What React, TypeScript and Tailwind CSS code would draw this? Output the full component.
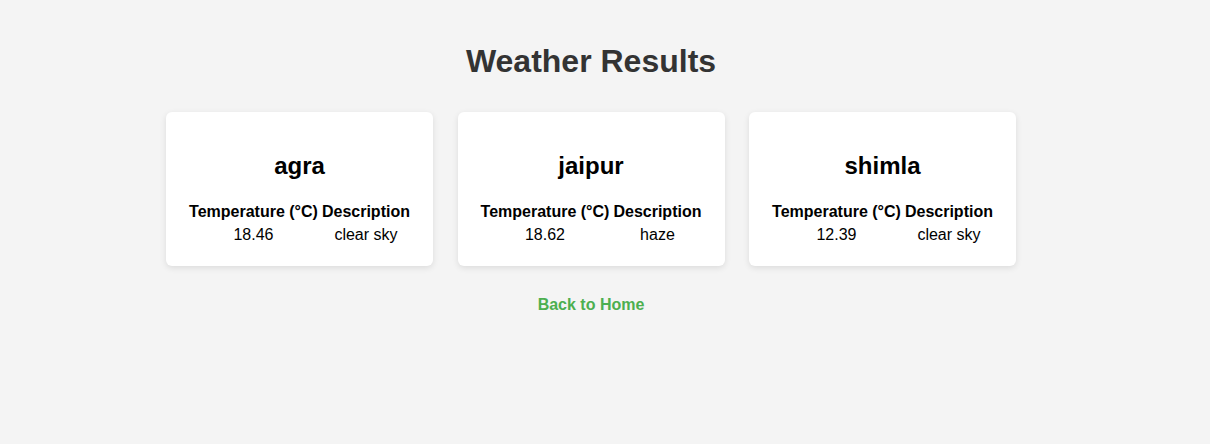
import React from "react";

const data = [
  { city: "agra", temp: "18.46", desc: "clear sky" },
  { city: "jaipur", temp: "18.62", desc: "haze" },
  { city: "shimla", temp: "12.39", desc: "clear sky" },
];

export default function App() {
  return (
    <div
      className="min-h-[444px] bg-[#f4f4f4] pr-[28px] text-center"
      style={{ fontFamily: '"Liberation Sans", Arial, sans-serif' }}
    >
      <div className="pt-[20px]">
        <h1 className="mt-[23.44px] mb-0 text-[32px] leading-[36.8px] font-bold text-[#333]">
          Weather Results
        </h1>
        <div className="mt-[31.5px] flex justify-center gap-[24.5px]">
          {data.map((d) => (
            <div
              key={d.city}
              className="w-[267px] rounded-[6px] bg-white px-[20px] pt-[20px] pb-[19px] shadow-[0_2px_6px_rgba(0,0,0,0.1)]"
            >
              <h2 className="mt-[19.92px] mb-[20.92px] text-[24px] leading-[27.6px] font-bold text-black">
                {d.city}
              </h2>
              <table className="w-full border-separate border-spacing-[2px] text-[16px] leading-[18.4px] text-black">
                <thead>
                  <tr>
                    <th className="p-px text-center font-bold">Temperature (°C)</th>
                    <th className="p-px text-center font-bold">Description</th>
                  </tr>
                </thead>
                <tbody>
                  <tr>
                    <td className="p-px text-center">{d.temp}</td>
                    <td className="p-px text-center">{d.desc}</td>
                  </tr>
                </tbody>
              </table>
            </div>
          ))}
        </div>
        <div className="mt-[27px]">
          <a href="#" className="text-[16px] leading-[18.4px] font-bold text-[#4caf50] no-underline">
            Back to Home
          </a>
        </div>
      </div>
    </div>
  );
}
